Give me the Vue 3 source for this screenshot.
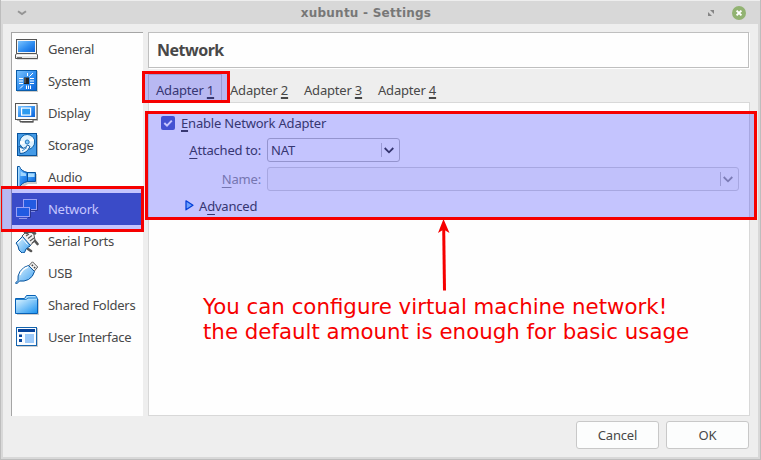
<script setup>
import { ref } from 'vue'

const items = ['General', 'System', 'Display', 'Storage', 'Audio', 'Network', 'Serial Ports', 'USB', 'Shared Folders', 'User Interface']
const active = ref('Network')
const tabs = [1, 2, 3, 4]
const tab = ref(1)
const enabled = ref(true)
</script>

<template>
  <div class="window">
    <header class="titlebar">
      <svg class="menu" width="10" height="6" viewBox="0 0 10 6"><path d="M1 1.2 L5 4 L9 1.2" fill="none" stroke="#949494" stroke-width="2" /></svg>
      <h1><span>xubuntu - Settings</span></h1>
      <svg class="max" width="6" height="6" viewBox="0 0 6 6"><path d="M2 0H6V4ZM0 2V6H4Z" fill="#858585" /></svg>
      <svg class="close" width="14" height="14" viewBox="0 0 14 14"><circle cx="7" cy="7" r="7" fill="#92b372" /><path d="M4.6 4.6L9.4 9.4M9.4 4.6L4.6 9.4" stroke="#fff" stroke-width="2" /></svg>
    </header>

    <main class="body">
      <nav class="sidebar">
        <div v-for="item in items" :key="item" class="item" :class="{ selected: item === active }" @click="active = item">
          <svg class="icon" width="24" height="24" viewBox="0 0 24 24">
            <defs>
              <linearGradient id="blue" x1="0" y1="0" x2="1" y2="1"><stop offset="0" stop-color="#7cc4ff" /><stop offset=".55" stop-color="#2d8cf0" /><stop offset="1" stop-color="#0c62d8" /></linearGradient>
              <linearGradient id="pale" x1="0" y1="0" x2="1" y2="1"><stop offset="0" stop-color="#e4f6ff" /><stop offset="1" stop-color="#3c9ff0" /></linearGradient>
              <linearGradient id="folder" x1="0" y1="0" x2="1" y2="1"><stop offset="0" stop-color="#d4f0ff" /><stop offset="1" stop-color="#1e94f0" /></linearGradient>
            </defs>
            <g v-if="item === 'General'">
              <path d="M2 18H23V22.5H2Z" fill="#bbb" />
              <rect x="1.5" y="2.5" width="20" height="14" fill="#f6f6f6" stroke="#555" />
              <rect x="3" y="4" width="17" height="11" fill="url(#blue)" />
              <path d="M1.5 16.5H21.5L22.5 18V21.5H.5V18Z" fill="#e8e8e8" stroke="#555" />
              <path d="M1 18.5H22" stroke="#fff" /><path d="M2 20.5H7" stroke="#777" />
            </g>
            <g v-else-if="item === 'System'">
              <path d="M2 2H23V23H2Z" fill="#ccc" />
              <rect x="1.5" y="1.5" width="20" height="20" fill="url(#blue)" stroke="#0a5ca8" />
              <path d="M12.5 4V7M14.5 7.5L18 4M4 9.5H8M4 12H8M4 14.5H8M15 9.5H19M15 12H19M15 14.5H19M11.5 16.5V20M13.5 16.5V20M15.5 16.5V20M8 16.5L5 19.5" stroke="#fff" stroke-width="1" />
              <rect x="9" y="8.5" width="5" height="6.5" fill="#222" /><path d="M10 9V14" stroke="#777" />
            </g>
            <g v-else-if="item === 'Display'">
              <path d="M2 4H23V20H19V22H7V20H2Z" fill="#bbb" />
              <rect x=".5" y="2.5" width="21.5" height="16" fill="#fafafa" stroke="#555" />
              <rect x="3" y="5" width="17" height="11" fill="url(#blue)" />
              <rect x="6.6" y="7.1" width="9" height="7" fill="#2d9bef" stroke="#fff" stroke-width="1.2" />
              <path d="M5 18.5H18V21H5Z" fill="#fff" stroke="#555" /><path d="M5 20.5H18" stroke="#555" />
            </g>
            <g v-else-if="item === 'Storage'">
              <path d="M4 2H23V24H4Z" fill="#bbb" />
              <rect x="2.5" y=".5" width="19" height="22" fill="#459be7" stroke="#07539d" />
              <circle cx="12.2" cy="9" r="7.5" fill="#dff2ff" stroke="#0860a8" />
              <path d="M12 9L17 4A7 7 0 0 1 19 8ZM12 9L5.5 12A7 7 0 0 1 5 8Z" fill="#fff" />
              <circle cx="12.2" cy="9" r="2" fill="#83c6fa" stroke="#2177bd" />
              <path d="M4 13Q9 18 12.5 12L15 13.5Q12 20.5 5 20.5Z" fill="#f3faff" stroke="#07539d" />
              <path d="M7 18L12 14.5" stroke="#388dd0" />
            </g>
            <g v-else-if="item === 'Audio'">
              <path d="M5 4L13 9L22 9V19H13L5 24Z" fill="#ccc" />
              <path d="M11.5 7.5H20.5V16.5H11.5Z" fill="url(#blue)" stroke="#07539d" />
              <path d="M13 8.5H19.5V12H13Z" fill="#a9dcff" />
              <path d="M2.5 1.5H4.5Q6 6 12.5 7.5V16.5Q6 18 4.5 22.5H2.5Z" fill="url(#blue)" stroke="#07539d" />
              <path d="M3 2H4.5V22H3Z" fill="#a9dcff" /><path d="M5.5 6Q8 8 11 8.5V11H5.5Z" fill="#9fd6ff" />
            </g>
            <g v-else-if="item === 'Network'">
              <rect x="8.5" y="2.5" width="13" height="10" fill="#2c75d8" stroke="#c6d0f4" />
              <path d="M16 14.5H20" stroke="#a4b5d8" />
              <path d="M22.5 3V13.5H15" fill="none" stroke="#374675" />
              <rect x="1.5" y="10.5" width="13" height="9" fill="#2c75d8" stroke="#c6d0f4" />
              <path d="M4 21.5H12" stroke="#b9c5e0" /><path d="M15.5 12V20.5H13" fill="none" stroke="#374675" />
            </g>
            <g v-else-if="item === 'Serial Ports'" stroke-linejoin="round">
              <path d="M7 7L10.5 3.5H18.5L20 11L14 18Z" fill="#f2f2f2" stroke="#555" />
              <path d="M10 3L12 4M18 3.5L20 4.5M20 12L22.5 15M13 20L16 22" stroke="#555" stroke-width="2.6" stroke-linecap="round" />
              <path d="M11 7L14 5M13 9.5L17 6.5M15 12L19 9M17 14L20 12" stroke="#555" stroke-width="1.1" />
              <path d="M7.5 7.5L1 14L3 17L4 21L7 24L9.5 23.5L11 20L15.5 16.5Z" fill="url(#pale)" stroke="#07539d" />
              <path d="M3 14L7.5 9.5L12.5 15.5" fill="none" stroke="#fff" />
            </g>
            <g v-else-if="item === 'USB'" stroke-linejoin="round">
              <path d="M13.5 5L17.5 .8L22.7 6L19 10.5Z" fill="#f3f3f3" stroke="#555" />
              <path d="M16.8 3.8L18 5M19 6L20.2 7.2" stroke="#444" stroke-width="1.5" />
              <path d="M13.5 4.5L19.5 10.5Q18 16 13.5 18.5Q9 20.8 4.5 20L1.5 23L.5 22L3 19.3Q2.2 15 5 10.5Q8.5 5.5 13.5 4.5Z" fill="url(#pale)" stroke="#07539d" />
              <path d="M13 6Q7 8 5 14" fill="none" stroke="#fff" stroke-width="1.5" />
            </g>
            <g v-else-if="item === 'Shared Folders'">
              <path d="M2 6H24V22H2Z" fill="#ccc" />
              <path d="M.5 20.5V5.5H9.5L11.5 2.5H20.5L22.5 5.5V20.5Z" fill="#a7ddff" stroke="#0760b5" />
              <rect x="1" y="7" width="21" height="13" fill="url(#folder)" />
              <path d="M1 6.5H11L13 5H22" fill="none" stroke="#2480cc" />
            </g>
            <g v-else>
              <path d="M2 3H23V22H2Z" fill="#ccc" />
              <rect x="1.5" y="2.5" width="20" height="18" fill="#fafcff" stroke="#1564ae" />
              <path d="M3 4H20V7H3Z" fill="#07439b" />
              <path d="M4 9.5H7V12H4ZM4 14H7V17H4Z" fill="#07439b" />
              <rect x="10" y="9" width="9" height="9" fill="#9cc9fa" />
            </g>
          </svg>
          <span>{{ item }}</span>
        </div>
      </nav>

      <section class="content">
        <h2>{{ active }}</h2>
        <div class="tabs">
          <div v-for="n in tabs" :key="n" class="tab" :class="{ current: n === tab }" @click="tab = n"><span>Adapter <u>{{ n }}</u></span></div>
        </div>
        <div class="pane">
          <label class="enable" @click="enabled = !enabled">
            <svg width="14" height="14" viewBox="0 0 14 14"><rect width="14" height="14" rx="2" fill="#576ac5" /><path v-if="enabled" d="M3.3 7L6 9.6L10.8 4.6" fill="none" stroke="#fff" stroke-width="2" /></svg>
            <span><u>E</u>nable Network Adapter</span>
          </label>
          <div class="row">
            <span class="label"><u>A</u>ttached to:</span>
            <div class="combo short"><span>NAT</span><i></i><svg width="10" height="7" viewBox="0 0 10 7"><path d="M.7 1L5 5.3L9.3 1" fill="none" stroke="#444" stroke-width="1.8" /></svg></div>
          </div>
          <div class="row name">
            <span class="label"><u>N</u>ame:</span>
            <div class="combo"><i></i><svg width="10" height="7" viewBox="0 0 10 7"><path d="M.7 1L5 5.3L9.3 1" fill="none" stroke="#a0a0a0" stroke-width="1.8" /></svg></div>
          </div>
          <div class="advanced">
            <svg width="9" height="11" viewBox="0 0 9 11"><path d="M1 .8L8 5.2L1 9.8Z" fill="#8cd0ff" stroke="#0752cc" stroke-width="1.3" stroke-linejoin="round" /></svg>
            <span>A<u>d</u>vanced</span>
          </div>
        </div>
      </section>
    </main>

    <footer class="buttons">
      <button>Cancel</button>
      <button>OK</button>
    </footer>

    <div class="mark mark-tab"></div>
    <div class="mark mark-pane"></div>
    <div class="mark mark-nav"></div>
    <svg class="arrow" width="14" height="73" viewBox="0 0 14 73"><path d="M6.7 10L7.5 71.5" stroke="#f60000" stroke-width="3" /><path d="M6.5 0L12.5 14L6.6 10.5L1 14Z" fill="#f60000" /></svg>
    <p class="note"><span>You can configure virtual machine network!</span><br><span>the default amount is enough for basic usage</span></p>
  </div>
</template>

<style>
body { margin: 0; overflow: hidden; }
</style>

<style scoped>
* { box-sizing: border-box; }
.window {
  position: relative;
  width: 761px;
  height: 460px;
  overflow: hidden;
  display: flex;
  flex-direction: column;
  background: #eee;
  border: solid #bdbdbd;
  border-width: 0 1px 1px;
  box-shadow: inset 2px 0 #d8d8d8, inset -2px -2px #d8d8d8;
  font: 13px/18px "Noto Sans", sans-serif;
  letter-spacing: -.19px;
  color: #484848;
}
.titlebar {
  flex: none;
  height: 24px;
  display: flex;
  align-items: center;
  background: #d8d8d8;
  border-top: 1px solid #eee;
  padding: 0 14px 0 16px;
}
h1 {
  flex: 1;
  margin: 0;
  padding-right: 3px;
  text-align: center;
  font: bold 12px/22px "DejaVu Sans", sans-serif;
  letter-spacing: .24px;
  color: #777;
}
.max { margin-right: 18px; }
.body { flex: none; height: 392px; display: flex; gap: 5px; padding: 8px 10px 0; }
.sidebar { width: 132px; height: 384px; background: #fefefe; border: solid #a5a5a5; border-width: 1px 0 0 1px; letter-spacing: -.27px; }
.item { height: 32px; display: flex; align-items: center; gap: 9px; padding-left: 3px; margin-right: 2px; white-space: nowrap; }
.item.selected { background: #4b61b8; color: #fff; }
.icon { flex: none; }
.content { width: 602px; display: flex; flex-direction: column; }
h2 {
  margin: 0;
  width: 601px;
  height: 36px;
  padding-left: 8px;
  border: 1px solid #bfbfbf;
  box-shadow: 1px 1px #fff;
  background: #fefefe;
  font: bold 16px/34px "Noto Sans", sans-serif;
  letter-spacing: -.5px;
}
.tabs { display: flex; height: 34px; align-items: flex-end; }
.tab { width: 74px; height: 28px; padding: 3px 0 0 8px; line-height: 24px; border: 1px solid transparent; border-width: 1px 0 0; white-space: nowrap; }
.tab.current { border: 1px solid #c8c8c8; border-bottom: 0; padding-left: 7px; }
u { text-decoration: underline; text-underline-offset: 3px; text-decoration-thickness: 1px; }
.tab u, .enable u { text-decoration-thickness: 2px; text-underline-offset: 2px; }
.pane { height: 314px; border: 1px solid #d8d8d8; background: #fefefe; padding: 10px 10px 0 12px; }
.enable { display: flex; align-items: center; height: 20px; gap: 6px; }
.row { display: flex; align-items: center; gap: 6px; height: 24px; margin-top: 5px; }
.row.name { color: #999; }
.label { width: 100px; text-align: right; }
.combo { flex: 1; height: 24px; display: flex; align-items: center; border: 1px solid #d9d9d9; border-radius: 3px; padding: 0 5px 0 3px; background: #fafafa; }
.combo.short { flex: none; width: 133px; border-color: #c0c0c0; background: #fefefe; }
.combo i { width: 1px; height: 14px; background: #c8c8c8; margin: 0 2px 0 auto; }
.advanced { display: flex; align-items: center; gap: 5px; height: 20px; margin: 5px 0 0 24px; }
.advanced svg { margin-top: -2px; }
.buttons { display: flex; justify-content: flex-end; gap: 7px; padding: 5px 11px 0 0; }
button { width: 83px; height: 28px; border: 1px solid #c8c8c8; border-radius: 3px; background: #fcfdfd; font: inherit; letter-spacing: inherit; color: inherit; padding: 0; }
.mark { position: absolute; border: 3px solid #f60000; background: rgba(0, 0, 255, .227); }
.mark-tab { left: 141px; top: 71px; width: 88px; height: 32px; }
.mark-pane { left: 144px; top: 111px; width: 612px; height: 109px; }
.mark-nav { left: -2px; top: 186px; width: 145px; height: 46px; }
.arrow { position: absolute; left: 436px; top: 219px; }
.note { position: absolute; left: 202px; top: 294px; margin: 0; color: #f60000; font: 21.33px/25px "DejaVu Sans", sans-serif; letter-spacing: 0; white-space: nowrap; }
</style>
